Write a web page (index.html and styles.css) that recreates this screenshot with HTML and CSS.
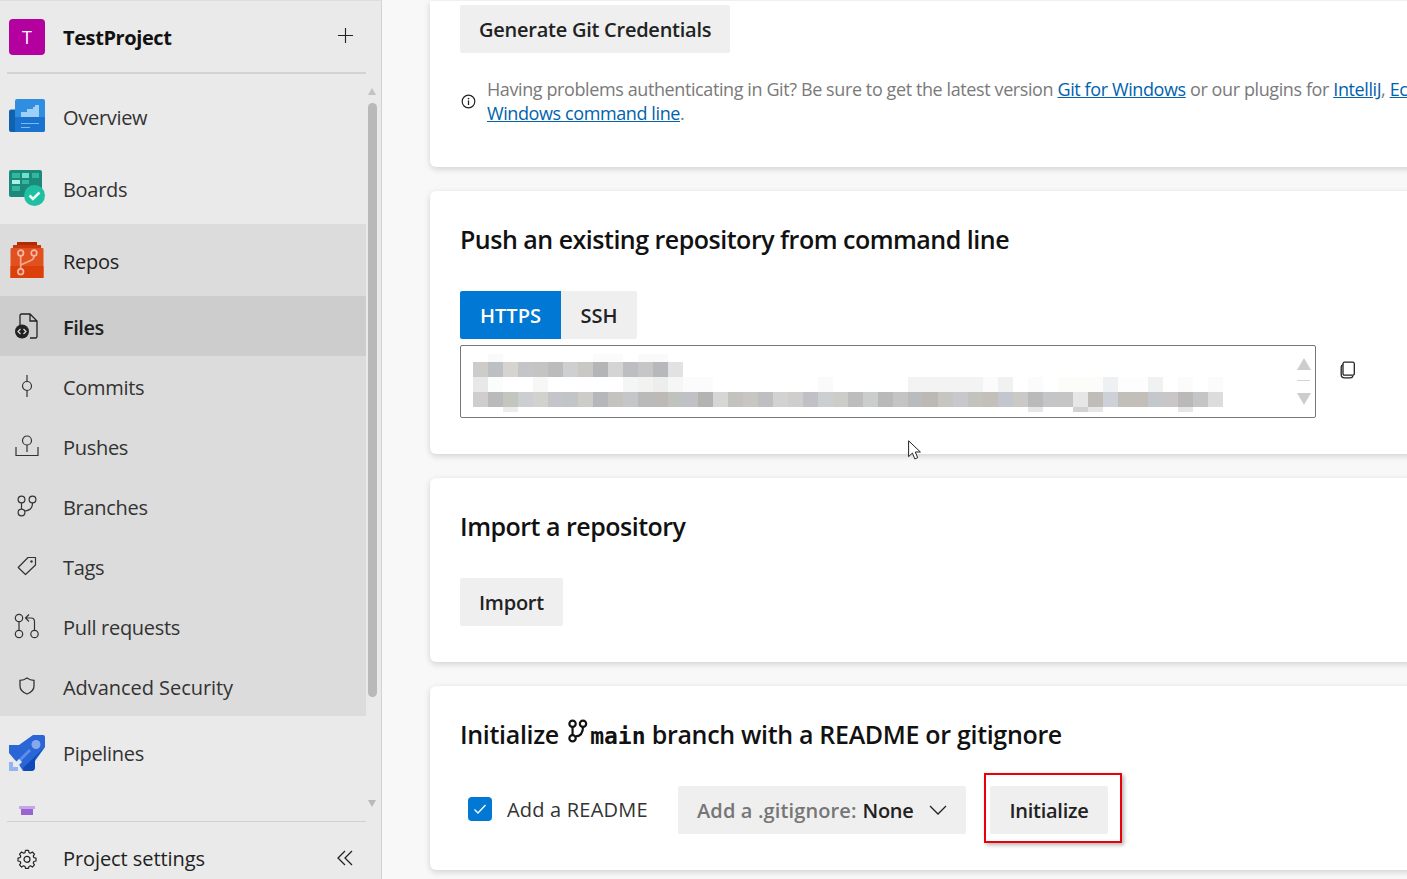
FILE: index.html
```html
<!DOCTYPE html>
<html lang="en">
<head>
<meta charset="utf-8">
<title>Repos - Files</title>
<link rel="stylesheet" href="styles.css">
</head>
<body>
<div class="app">
  <aside class="sidebar">
    <header class="project">
      <div class="avatar">T</div>
      <div class="project-name">TestProject</div>
      <svg class="plus" viewBox="0 0 18 18"><path d="M9 1v16M1 9h16" fill="none" stroke="#222" stroke-width="1.200"/></svg>
    </header>
    <div class="rule-top"></div>
    <div class="nav-wrap">
      <nav class="nav">
        <a class="hub">
          <span class="hub-icon"><svg viewBox="0 0 36 36" width="36" height="36"><path d="M0 13.500a2 2 0 0 1 2-2h10V34H2a2 2 0 0 1-2-2z" fill="#0f62b0"/><path d="M6 3a2 2 0 0 1 2-2h26a2 2 0 0 1 2 2v29a2 2 0 0 1-2 2H6z" fill="#2f8ee0"/><path d="M6 19h30v13a2 2 0 0 1-2 2H6z" fill="#1a74cf"/><path d="M12 19v-5h6v-3h6V9h2V7h4v12z" fill="#9fd0f7"/><path d="M12 25.500h18M12 29.500h9" stroke="#7dbbf0" stroke-width="1"/></svg></span>
          <span class="label">Overview</span>
        </a>
        <a class="hub">
          <span class="hub-icon"><svg viewBox="0 0 36 36" width="36" height="36"><path d="M0 2a2 2 0 0 1 2-2h29a2 2 0 0 1 2 2v25H2a2 2 0 0 1-2-2z" fill="#1b8a7a"/><path d="M3 3h8v5H3zM13 3h7v5h-7zM23 3h7v5h-7zM13 10h7v4h-7zM3 16h8v5H3z" fill="#35b79f"/><path d="M13 3h7v5h-7z" fill="#6fe0cb"/><path d="M3 10h8v4H3z" fill="#a5f2e2"/><circle cx="25.500" cy="25.500" r="10.500" fill="#1fc0a2"/><path d="M20.500 25.500l3.500 3.500 6.500-6.500" fill="none" stroke="#e9fbf7" stroke-width="2.600"/></svg></span>
          <span class="label">Boards</span>
        </a>
        <div class="group">
          <a class="hub hub-current">
            <span class="hub-icon"><svg viewBox="0 0 36 36" width="36" height="36"><path d="M8 0h20v3H8z" fill="#b12a05"/><path d="M4 3h28v4H4z" fill="#c8380c"/><path d="M2.500 6h31a1 1 0 0 1 1 1v29h-33V7a1 1 0 0 1 1-1z" fill="#e0511f"/><path d="M1.500 24h33v12h-33z" fill="#db3f0a"/><path d="M11.700 14v13M11.700 23l11-5c1.600-.8 2.300-1.500 2.300-4" stroke="#f6a88f" stroke-width="1.700" fill="none"/><circle cx="11.700" cy="11" r="2.800" fill="#e0511f" stroke="#f6b8a4" stroke-width="1.700"/><circle cx="25" cy="11" r="2.800" fill="#e0511f" stroke="#f6b8a4" stroke-width="1.700"/><circle cx="11.700" cy="29.700" r="2.800" fill="#e0451b" stroke="#f6b8a4" stroke-width="1.700"/></svg></span>
            <span class="label">Repos</span>
          </a>
          <a class="sub sub-active">
            <span class="hub-icon"><svg viewBox="0 0 24 26" width="24" height="26"><path d="M5 12V2.500A1.500 1.500 0 0 1 6.500 1H15l7 7v15.500a1.500 1.500 0 0 1-1.500 1.500H15M15 1v7h7" fill="none" stroke="#222" stroke-width="1.300"/><circle cx="7" cy="18.500" r="7" fill="#222"/><path d="M5.500 16L3 18.500 5.500 21M8.500 16l2.500 2.500L8.500 21" fill="none" stroke="#ddd" stroke-width="1.200"/></svg></span>
            <span class="label">Files</span>
          </a>
          <a class="sub">
            <span class="hub-icon"><svg viewBox="0 0 12 24" width="12" height="24"><circle cx="6" cy="12" r="4.500" fill="none" stroke="#333" stroke-width="1.200"/><path d="M6 1v6.500M6 16.500V23" stroke="#333" stroke-width="1.200"/></svg></span>
            <span class="label">Commits</span>
          </a>
          <a class="sub">
            <span class="hub-icon"><svg viewBox="0 0 24 22" width="24" height="22"><circle cx="12" cy="5.500" r="4.500" fill="none" stroke="#333" stroke-width="1.200"/><path d="M12 10v7M1 12v8.500h22V12" fill="none" stroke="#333" stroke-width="1.200"/></svg></span>
            <span class="label">Pushes</span>
          </a>
          <a class="sub">
            <span class="hub-icon"><svg viewBox="0 0 20 22" width="20" height="22"><circle cx="4.500" cy="4.500" r="3.400" fill="none" stroke="#333" stroke-width="1.200"/><circle cx="15.500" cy="4.500" r="3.400" fill="none" stroke="#333" stroke-width="1.200"/><circle cx="4.500" cy="17.500" r="3.400" fill="none" stroke="#333" stroke-width="1.200"/><path d="M4.500 8v6M7.900 16c5.100-.5 7.600-2.500 7.600-8" fill="none" stroke="#333" stroke-width="1.200"/></svg></span>
            <span class="label">Branches</span>
          </a>
          <a class="sub">
            <span class="hub-icon"><svg viewBox="0 0 20 20" width="20" height="20"><path d="M1.200 11.500L11 1.500h7.500v7.500L8.500 18.500z" fill="none" stroke="#333" stroke-width="1.200" stroke-linejoin="round"/><circle cx="14.500" cy="5.500" r="1.200" fill="#333"/></svg></span>
            <span class="label">Tags</span>
          </a>
          <a class="sub">
            <span class="hub-icon"><svg viewBox="0 0 26 26" width="26" height="26"><circle cx="5" cy="5" r="3.700" fill="none" stroke="#333" stroke-width="1.200"/><circle cx="5" cy="21" r="3.700" fill="none" stroke="#333" stroke-width="1.200"/><circle cx="20.500" cy="21" r="3.700" fill="none" stroke="#333" stroke-width="1.200"/><path d="M5 8.700v8.600M20.500 17.300V8.500c0-2.500-1.200-3.500-3.500-3.500h-5M15 1.500L11.500 5l3.500 3.500" fill="none" stroke="#333" stroke-width="1.200"/></svg></span>
            <span class="label">Pull requests</span>
          </a>
          <a class="sub">
            <span class="hub-icon"><svg viewBox="0 0 16 18" width="16" height="18"><path d="M8 1c2 1.500 4.500 2.300 7 2.300V9c0 4-3 6.500-7 8-4-1.500-7-4-7-8V3.300C3.500 3.300 6 2.500 8 1z" fill="none" stroke="#333" stroke-width="1.300"/></svg></span>
            <span class="label label-wide">Advanced Security</span>
          </a>
        </div>
        <a class="hub hub-pipelines">
          <span class="hub-icon"><svg viewBox="0 0 36 36" width="36" height="36"><path d="M0 10h10L24 0h10a2 2 0 0 1 2 2v10L26 26v6a4 4 0 0 1-4 4h-8l-5-8-4-4-5-6z" fill="#2a66d6"/><path d="M15 36h7a4 4 0 0 0 4-4v-8l10-12-22 21z" fill="#0f4ab8"/><circle cx="27" cy="9.500" r="4.500" fill="#86a9ee"/><path d="M9 27l12-12" stroke="#5d8de6" stroke-width="3"/><path d="M0 36V27h4v5h5v4z" fill="#94b4f0"/><path d="M7 27l3 3 3-3-3-3z" fill="#dfe9fb"/></svg></span>
          <span class="label">Pipelines</span>
        </a>
        <a class="hub hub-artifacts">
          <span class="hub-icon"><svg viewBox="0 0 16 9" width="16" height="9"><path d="M0 0h16v3H0z" fill="#c7a6e8"/><path d="M2 3h12v6H2z" fill="#9964cf"/></svg></span>
        </a>
      </nav>
      <div class="scroll-rail">
        <span class="rail-up"></span>
        <span class="rail-thumb"></span>
        <span class="rail-down"></span>
      </div>
    </div>
    <div class="rule-bottom"></div>
    <footer class="settings">
      <span class="hub-icon"><svg viewBox="0 0 20 20" width="20" height="20"><path d="M8.300 1h3.400l.5 2.500 1.600.7 2.200-1.400 2.300 2.400-1.400 2.100.7 1.700 2.400.5v3.300l-2.400.5-.7 1.700 1.400 2.100-2.300 2.400-2.200-1.400-1.600.7-.5 2.100H8.300l-.5-2.100-1.600-.7L4 19.500l-2.300-2.400 1.400-2.100-.7-1.700L0 12.800V9.500l2.400-.5.7-1.700-1.400-2.100L4 2.800l2.200 1.400 1.600-.7z" transform="translate(1 .5) scale(.9)" fill="none" stroke="#222" stroke-width="1.300" stroke-linejoin="round"/><circle cx="10" cy="10.300" r="3" fill="none" stroke="#222" stroke-width="1.200"/></svg></span>
      <span class="settings-label">Project settings</span>
      <svg class="collapse" viewBox="0 0 16 16"><path d="M8 1L1 8l7 7M15 1L8 8l7 7" fill="none" stroke="#222" stroke-width="1.300"/></svg>
    </footer>
  </aside>

  <main class="main">
    <section class="card card-creds">
      <button class="btn btn-strong">Generate Git Credentials</button>
      <div class="notice">
        <svg class="notice-icon" viewBox="0 0 14 14"><circle cx="7" cy="7" r="5.900" fill="none" stroke="#222" stroke-width="1.100"/><path d="M7 6v4.300" stroke="#222" stroke-width="1.200"/><circle cx="7" cy="4.200" r=".8" fill="#222"/></svg>
        <p class="notice-text">Having problems authenticating in Git? Be sure to get the latest version <a class="link">Git for Windows</a> or our plugins for <a class="link">IntelliJ</a>, <a class="link">Eclipse</a><br><a class="link">Windows command line</a>.</p>
      </div>
    </section>

    <section class="card card-push">
      <h2 class="title">Push an existing repository from command line</h2>
      <div class="tabs">
        <button class="tab tab-on">HTTPS</button>
        <button class="tab">SSH</button>
      </div>
      <div class="clone-row">
        <div class="clone-box">
          <svg class="blur" width="750" height="58" viewBox="0 0 750 58" shape-rendering="crispEdges">
            <g class="blur-faint">
              <rect x="15" y="0" width="15" height="8" fill="#fafafa"/><rect x="120" y="0" width="30" height="8" fill="#fbfbfb"/><rect x="165" y="0" width="30" height="8" fill="#fafafa"/>
              <rect x="0" y="23" width="15" height="15" fill="#e8e8e8"/><rect x="15" y="23" width="15" height="15" fill="#fbfdfc"/><rect x="60" y="23" width="15" height="15" fill="#f7f7f7"/><rect x="150" y="23" width="30" height="15" fill="#f5f5f5"/><rect x="165" y="23" width="15" height="15" fill="#f2f2f1"/><rect x="180" y="23" width="15" height="15" fill="#ededec"/><rect x="195" y="23" width="15" height="15" fill="#f5f6f5"/><rect x="210" y="23" width="30" height="15" fill="#fbfbfb"/><rect x="345" y="23" width="15" height="15" fill="#fafafa"/><rect x="435" y="23" width="75" height="15" fill="#f3f3f3"/><rect x="510" y="23" width="15" height="15" fill="#fbfbfb"/><rect x="525" y="23" width="15" height="15" fill="#f0f2f1"/><rect x="555" y="23" width="15" height="15" fill="#fbfbfb"/><rect x="585" y="23" width="45" height="15" fill="#fcfcfb"/><rect x="630" y="23" width="15" height="15" fill="#eff0f2"/><rect x="645" y="23" width="30" height="15" fill="#fdfdfd"/><rect x="675" y="23" width="15" height="15" fill="#f0f2f1"/><rect x="705" y="23" width="15" height="15" fill="#fbfbfb"/><rect x="735" y="23" width="15" height="15" fill="#fbfbfb"/>
              <rect x="30" y="53" width="15" height="5" fill="#ececec"/><rect x="555" y="53" width="15" height="5" fill="#e6e6e6"/><rect x="600" y="53" width="15" height="5" fill="#d2d2d2"/><rect x="615" y="53" width="15" height="5" fill="#e6e6e6"/><rect x="705" y="53" width="15" height="5" fill="#e6e6e6"/>
            </g>
            <g class="blur-line1">
              <rect x="0" y="8" width="15" height="15" fill="#cdccca"/><rect x="15" y="8" width="15" height="15" fill="#bcc0c3"/><rect x="30" y="8" width="15" height="15" fill="#d5d4d1"/><rect x="45" y="8" width="15" height="15" fill="#c3c5c8"/><rect x="60" y="8" width="15" height="15" fill="#c4c4c2"/><rect x="75" y="8" width="15" height="15" fill="#bcbcbc"/><rect x="90" y="8" width="15" height="15" fill="#cdcfd1"/><rect x="105" y="8" width="15" height="15" fill="#c9c8c4"/><rect x="120" y="8" width="15" height="15" fill="#b4b5b7"/><rect x="135" y="8" width="15" height="15" fill="#d4d4d4"/><rect x="150" y="8" width="15" height="15" fill="#bdbec2"/><rect x="165" y="8" width="15" height="15" fill="#c6c6c6"/><rect x="180" y="8" width="15" height="15" fill="#b7b8bb"/><rect x="195" y="8" width="15" height="15" fill="#e2e2e2"/>
            </g>
            <g class="blur-line2">
              <rect x="0" y="38" width="15" height="15" fill="#cfcecc"/><rect x="15" y="38" width="15" height="15" fill="#bababa"/><rect x="30" y="38" width="15" height="15" fill="#c3c5bf"/><rect x="45" y="38" width="15" height="15" fill="#ccced1"/><rect x="60" y="38" width="15" height="15" fill="#d2d1ce"/><rect x="75" y="38" width="15" height="15" fill="#c4c5c8"/><rect x="90" y="38" width="15" height="15" fill="#c2c4c8"/><rect x="105" y="38" width="15" height="15" fill="#cdccc9"/><rect x="120" y="38" width="15" height="15" fill="#b5b7ba"/><rect x="135" y="38" width="15" height="15" fill="#c4c3c0"/><rect x="150" y="38" width="15" height="15" fill="#c4c6c8"/><rect x="165" y="38" width="15" height="15" fill="#bababb"/><rect x="180" y="38" width="15" height="15" fill="#bdb9b7"/><rect x="195" y="38" width="15" height="15" fill="#c0c2c0"/><rect x="210" y="38" width="15" height="15" fill="#bfc1c4"/><rect x="225" y="38" width="15" height="15" fill="#b3b3b1"/><rect x="240" y="38" width="15" height="15" fill="#d6d6d6"/><rect x="255" y="38" width="15" height="15" fill="#c4c2bf"/><rect x="270" y="38" width="15" height="15" fill="#c7c6c3"/><rect x="285" y="38" width="15" height="15" fill="#bfbfc3"/><rect x="300" y="38" width="15" height="15" fill="#d2d2d2"/><rect x="315" y="38" width="15" height="15" fill="#cfcecc"/><rect x="330" y="38" width="15" height="15" fill="#bfc1c6"/><rect x="345" y="38" width="15" height="15" fill="#cdced1"/><rect x="360" y="38" width="15" height="15" fill="#cccdc8"/><rect x="375" y="38" width="15" height="15" fill="#bdbdbd"/><rect x="390" y="38" width="15" height="15" fill="#cbcdcc"/><rect x="405" y="38" width="15" height="15" fill="#b9b9b9"/><rect x="420" y="38" width="15" height="15" fill="#c4c4c4"/><rect x="435" y="38" width="15" height="15" fill="#b9bbbe"/><rect x="450" y="38" width="15" height="15" fill="#bcb9b5"/><rect x="465" y="38" width="15" height="15" fill="#c5c5c2"/><rect x="480" y="38" width="15" height="15" fill="#c7c8cc"/><rect x="495" y="38" width="15" height="15" fill="#c2c3bc"/><rect x="510" y="38" width="15" height="15" fill="#c3bfbb"/><rect x="525" y="38" width="15" height="15" fill="#c3c6cf"/><rect x="540" y="38" width="15" height="15" fill="#cbc9c6"/><rect x="555" y="38" width="15" height="15" fill="#bbbaba"/><rect x="570" y="38" width="15" height="15" fill="#c3c5c7"/><rect x="585" y="38" width="15" height="15" fill="#c5c5c5"/><rect x="600" y="38" width="15" height="15" fill="#e6e6e6"/><rect x="615" y="38" width="15" height="15" fill="#c0bcb8"/><rect x="630" y="38" width="15" height="15" fill="#cdd0d6"/><rect x="645" y="38" width="30" height="15" fill="#c2bfbb"/><rect x="675" y="38" width="15" height="15" fill="#c4c7cc"/><rect x="690" y="38" width="15" height="15" fill="#c8c6c6"/><rect x="705" y="38" width="15" height="15" fill="#bbb8b8"/><rect x="720" y="38" width="15" height="15" fill="#c4c5c7"/><rect x="735" y="38" width="15" height="15" fill="#dcdcdc"/>
            </g>
          </svg>
          <div class="box-scroll">
            <span class="box-up"></span>
            <span class="box-sep"></span>
            <span class="box-down"></span>
          </div>
        </div>
        <svg class="copy" viewBox="0 0 16 18"><path d="M4.500 1.200h8.300a1.500 1.500 0 0 1 1.500 1.500v10a1.500 1.500 0 0 1-1.500 1.500H4.500A1.500 1.500 0 0 1 3 12.700v-10a1.500 1.500 0 0 1 1.500-1.500z" fill="none" stroke="#222" stroke-width="1.300"/><path d="M3 3.500C1.800 4 1.200 4.700 1.200 6v7.500c0 2 1.300 3.300 3.300 3.300h6c1.200 0 2-.6 2.500-1.800" fill="none" stroke="#222" stroke-width="1.300"/></svg>
      </div>
    </section>

    <section class="card card-import">
      <h2 class="title">Import a repository</h2>
      <button class="btn btn-strong">Import</button>
    </section>

    <section class="card card-init">
      <h2 class="title title-init">Initialize <svg class="branch" viewBox="0 0 22 26"><circle cx="5" cy="5" r="3.500" fill="none" stroke="#111" stroke-width="2.400"/><circle cx="16.500" cy="5" r="3.500" fill="none" stroke="#111" stroke-width="2.400"/><circle cx="5" cy="21" r="3.500" fill="none" stroke="#111" stroke-width="2.400"/><path d="M5 8.500v9M8.500 19c5-.5 8-3 8-10.500" fill="none" stroke="#111" stroke-width="2.400"/></svg><code class="mono">main</code> branch with a README or gitignore</h2>
      <div class="init-row">
        <label class="check">
          <span class="checkbox"><svg viewBox="0 0 16 16" width="16" height="16"><path d="M2.500 8.500l3.500 3.500 7.500-8" fill="none" stroke="#fff" stroke-width="1.300"/></svg></span>
          <span>Add a README</span>
        </label>
        <button class="select"><span class="select-label">Add a .gitignore:</span><strong class="select-value">None</strong><svg class="chev" viewBox="0 0 18 10"><path d="M1 1l8 8 8-8" fill="none" stroke="#222" stroke-width="1.300"/></svg></button>
        <div class="init-action">
          <button class="btn btn-init">Initialize</button>
          <span class="callout"></span>
        </div>
      </div>
    </section>

    <svg class="cursor" viewBox="0 0 13 20"><path d="M.6.800v15.800l3.800-3.500 2.400 5.800 2.900-1.200-2.400-5.700h5.100z" fill="#fff" stroke="#222" stroke-width="1"/></svg>
  </main>
</div>
</body>
</html>
```
FILE: styles.css
```css
* { box-sizing: border-box; }
html, body { margin: 0; height: 100%; overflow: hidden; }
body { font-family: "Open Sans", "Noto Sans", sans-serif; color: #222; font-size: 20px; }
.app { display: flex; height: 879px; width: 1407px; overflow: hidden; }

.sidebar { width: 382px; flex: none; background: #eaeaea; border-right: 1px solid #d2d2d2; border-top: 1px solid #dedede; display: flex; flex-direction: column; }
.project { height: 71px; flex: none; display: flex; align-items: center; padding: 0 27px 0 9px; }
.avatar { width: 36px; height: 36px; border-radius: 4px; background: #b4009e; color: #fff; display: flex; align-items: center; justify-content: center; font-size: 18px; margin-right: 18px; }
.project-name { font-weight: 700; font-size: 20px; flex: 1; color: #111; letter-spacing: -.4px; padding-top: 2px; }
.plus { width: 17px; height: 17px; margin-top: -3px; }
.rule-top { flex: none; height: 2px; width: 359px; margin-left: 7px; background: #d3d3d3; }
.nav-wrap { flex: none; height: 747px; display: flex; overflow: hidden; }
.nav { width: 366px; flex: none; height: 747px; overflow: hidden; padding-top: 6px; }
.hub, .sub { display: flex; align-items: center; color: #333; letter-spacing: -.3px; }
.hub { height: 72px; padding-left: 9px; }
.sub { height: 60px; padding-left: 9px; }
.label { margin-left: 18px; padding-top: 2px; }
.label-wide { letter-spacing: -.05px; }
.hub-icon { width: 36px; height: 36px; flex: none; display: flex; align-items: center; justify-content: center; }
.group { background: #dcdcdc; }
.hub-current { color: #222; font-weight: 500; }
.sub-active { background: #cdcdcd; color: #222; font-weight: 600; letter-spacing: -.45px; }
.hub-pipelines { height: 73px; }
.hub-artifacts { height: 41px; align-items: flex-start; padding-top: 17px; }
.hub-artifacts .hub-icon { height: 9px; }

.scroll-rail { width: 15px; flex: none; display: flex; flex-direction: column; align-items: center; padding: 14px 3px 0 0; }
.rail-up { width: 0; height: 0; border: 4.500px solid transparent; border-top: 0; border-bottom: 7px solid #c2c2c2; }
.rail-thumb { width: 9px; height: 594px; border-radius: 4.500px; background: #b9b9b9; margin-top: 8px; }
.rail-down { width: 0; height: 0; border: 4.500px solid transparent; border-bottom: 0; border-top: 7px solid #b9b9b9; margin-top: 103px; }

.rule-bottom { flex: none; height: 1px; width: 359px; margin-left: 7px; background: #d0d0d0; }
.settings { flex: none; height: 57px; display: flex; align-items: center; padding: 16px 28px 0 9px; color: #222; }
.settings-label { flex: 1; margin-left: 18px; letter-spacing: -.08px; }
.collapse { width: 16px; height: 16px; margin-top: -2px; }

.main { position: relative; flex: 1; min-width: 0; background: #f8f8f8; padding: 1px 0 0 48px; display: flex; flex-direction: column; gap: 24px; overflow: hidden; }
.card { width: 1100px; flex: none; background: #fff; border-radius: 6px; box-shadow: 0 2px 6px rgba(0,0,0,.16); padding-left: 30px; }
.card-creds { height: 166px; padding-top: 4px; border-radius: 0 0 6px 6px; }
.card-push { height: 263px; padding-top: 28px; }
.card-import { height: 184px; padding-top: 28px; }
.card-init { height: 184px; padding-top: 28px; }

.title { margin: 0; font-size: 25px; line-height: 40px; font-weight: 600; color: #111; letter-spacing: -.5px; white-space: nowrap; }
.btn { font: inherit; border: 0; border-radius: 2px; background: #efefef; color: #222; height: 48px; padding: 0 19px; display: block; letter-spacing: -.25px; white-space: nowrap; }
.btn-strong { font-weight: 600; }
.card-import .btn { margin-top: 32px; }

.notice { display: flex; align-items: center; margin-top: 24px; }
.notice-icon { width: 15px; height: 15px; flex: none; margin: 0 11px 0 1px; }
.notice-text { margin: 0; font-size: 18px; line-height: 24px; color: #7a7a7a; white-space: nowrap; letter-spacing: -.4px; }
.link { color: #0062ad; text-decoration: underline; }

.tabs { display: flex; margin-top: 32px; }
.tab { font: inherit; border: 0; height: 48px; width: 76px; padding: 0; background: #efefef; color: #222; border-radius: 0 2px 2px 0; font-weight: 600; letter-spacing: 0; }
.tab-on { width: 101px; background: #0078d4; color: #fff; border-radius: 2px 0 0 2px; }
.clone-row { display: flex; align-items: flex-start; margin-top: 6px; }
.clone-box { position: relative; width: 856px; height: 73px; border: 1px solid #767676; border-radius: 2px; background: #fff; padding: 8px 0 0 12px; }
.blur { display: block; }
.box-scroll { position: absolute; top: 12px; right: 4px; width: 15px; display: flex; flex-direction: column; align-items: center; }
.box-up { width: 0; height: 0; border: 7px solid transparent; border-top: 0; border-bottom: 12px solid #cdcdcd; }
.box-sep { width: 13px; height: 1px; background: #d4d4d4; margin-top: 10px; }
.box-down { width: 0; height: 0; border: 7px solid transparent; border-bottom: 0; border-top: 12px solid #cdcdcd; margin-top: 12px; }
.copy { width: 16px; height: 18px; margin: 16px 0 0 24px; flex: none; }

.title-init { letter-spacing: -.32px; }
.branch { width: 20px; height: 24px; margin: 0 2px 0 3px; vertical-align: 1px; }
.mono { font-family: "DejaVu Sans Mono", "Liberation Mono", monospace; font-size: 23px; font-weight: 700; letter-spacing: 0; }
.init-row { display: flex; align-items: center; margin-top: 30px; padding-left: 8px; }
.check { display: flex; align-items: center; letter-spacing: .2px; color: #333; width: 210px; margin-top: -2px; }
.checkbox { width: 24px; height: 24px; border-radius: 4px; background: #0078d4; margin-right: 15px; display: flex; align-items: center; justify-content: center; }
.select { font: inherit; border: 0; border-radius: 2px; background: #efefef; width: 288px; height: 48px; padding: 0 19px; display: flex; align-items: center; white-space: nowrap; color: #222; }
.select-label { color: #767676; font-weight: 600; letter-spacing: .13px; }
.select-value { font-weight: 600; color: #222; margin-left: 6px; letter-spacing: -.3px; }
.chev { width: 18px; height: 10px; margin-left: auto; }
.init-action { position: relative; margin-left: 24px; }
.btn-init { width: 118px; padding: 0; font-weight: 600; }
.callout { position: absolute; left: -6px; top: -13px; width: 138px; height: 70px; border: 2px solid #e8000b; box-shadow: 2px 2px 4px rgba(0,0,0,.3); }

.cursor { position: absolute; left: 526px; top: 440px; width: 13px; height: 20px; }
```
